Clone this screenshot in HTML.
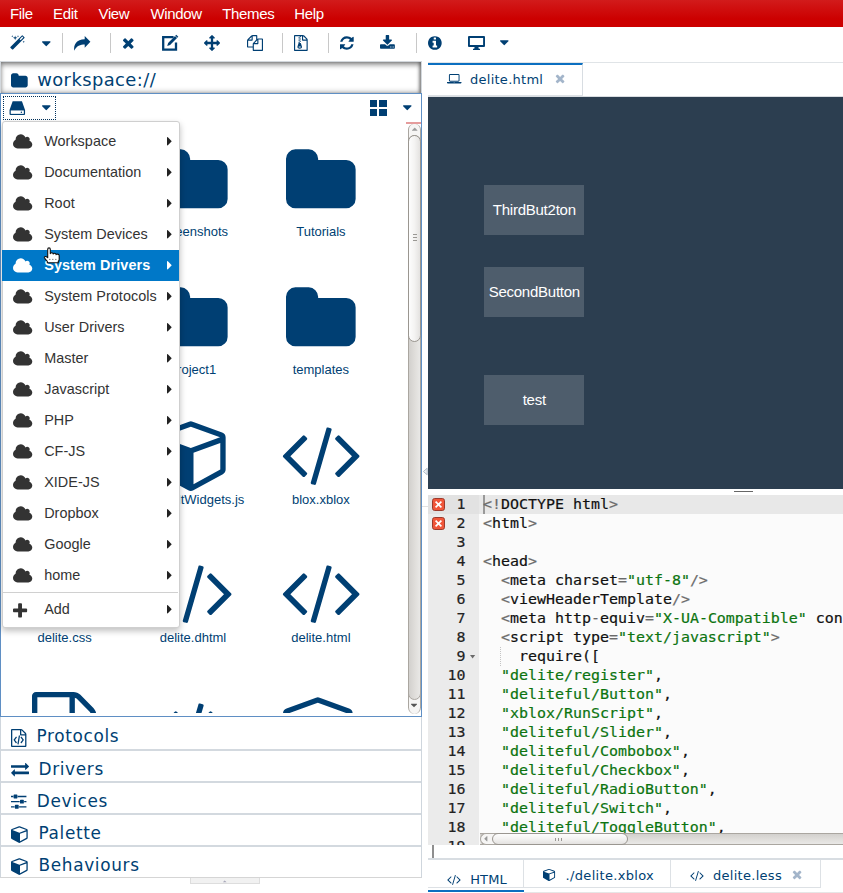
<!DOCTYPE html>
<html><head><meta charset="utf-8"><title>delite.html</title>
<style>
html,body{margin:0;padding:0;}
body{width:843px;height:893px;overflow:hidden;background:#fff;position:relative;font-family:"Liberation Sans",sans-serif;}
.b{position:absolute;box-sizing:border-box;}
.i{position:absolute;display:block;overflow:visible;}
.t{position:absolute;line-height:0;white-space:pre;}
.ls{font-family:"Liberation Sans",sans-serif;}
.dj{font-family:"DejaVu Sans",sans-serif;}
.mo{font-family:"DejaVu Sans Mono","Liberation Mono",monospace;-webkit-text-stroke:0.2px;}
.g{color:#6a6a6a}.s{color:#0c7410}
</style></head><body>

<div class="b" style="left:0px;top:0px;width:843px;height:27px;background:linear-gradient(#d21b1b,#cc0000 70%);"></div>
<div class="t ls" style="left:9.90px;top:14.00px;font-size:15px;color:#fff;letter-spacing:-0.35px;"><span>File</span></div>
<div class="t ls" style="left:53.00px;top:14.00px;font-size:15px;color:#fff;letter-spacing:-0.35px;"><span>Edit</span></div>
<div class="t ls" style="left:98.50px;top:14.00px;font-size:15px;color:#fff;letter-spacing:-0.35px;"><span>View</span></div>
<div class="t ls" style="left:150.50px;top:14.00px;font-size:15px;color:#fff;letter-spacing:-0.35px;"><span>Window</span></div>
<div class="t ls" style="left:222.30px;top:14.00px;font-size:15px;color:#fff;letter-spacing:-0.35px;"><span>Themes</span></div>
<div class="t ls" style="left:294.30px;top:14.00px;font-size:15px;color:#fff;letter-spacing:-0.35px;"><span>Help</span></div>
<svg class="i" style="left:10.30px;top:35.20px;" width="14.86" height="16.00" viewBox="0 0 1664 1792"><path fill="#003f73" transform="translate(0,1536) scale(1,-1)" d="M1190 955l293 293l-107 107l-293 -293zM1637 1248q0 -27 -18 -45l-1286 -1286q-18 -18 -45 -18t-45 18l-198 198q-18 18 -18 45t18 45l1286 1286q18 18 45 18t45 -18l198 -198q18 -18 18 -45zM286 1438l98 -30l-98 -30l-30 -98l-30 98l-98 30l98 30l30 98zM636 1276 l196 -60l-196 -60l-60 -196l-60 196l-196 60l196 60l60 196zM1566 798l98 -30l-98 -30l-30 -98l-30 98l-98 30l98 30l30 98zM926 1438l98 -30l-98 -30l-30 -98l-30 98l-98 30l98 30l30 98z"/></svg>
<svg class="i" style="left:121.70px;top:35.20px;" width="12.57" height="16.00" viewBox="0 0 1408 1792"><path fill="#003f73" transform="translate(0,1536) scale(1,-1)" d="M1298 214q0 -40 -28 -68l-136 -136q-28 -28 -68 -28t-68 28l-294 294l-294 -294q-28 -28 -68 -28t-68 28l-136 136q-28 28 -28 68t28 68l294 294l-294 294q-28 28 -28 68t28 68l136 136q28 28 68 28t68 -28l294 -294l294 294q28 28 68 28t68 -28l136 -136q28 -28 28 -68 t-28 -68l-294 -294l294 -294q28 -28 28 -68z"/></svg>
<svg class="i" style="left:204.00px;top:35.20px;" width="16.00" height="16.00" viewBox="0 0 1792 1792"><path fill="#003f73" transform="translate(0,1536) scale(1,-1)" d="M1792 640q0 -26 -19 -45l-256 -256q-19 -19 -45 -19t-45 19t-19 45v128h-384v-384h128q26 0 45 -19t19 -45t-19 -45l-256 -256q-19 -19 -45 -19t-45 19l-256 256q-19 19 -19 45t19 45t45 19h128v384h-384v-128q0 -26 -19 -45t-45 -19t-45 19l-256 256q-19 19 -19 45 t19 45l256 256q19 19 45 19t45 -19t19 -45v-128h384v384h-128q-26 0 -45 19t-19 45t19 45l256 256q19 19 45 19t45 -19l256 -256q19 -19 19 -45t-19 -45t-45 -19h-128v-384h384v128q0 26 19 45t45 19t45 -19l256 -256q19 -19 19 -45z"/></svg>
<svg class="i" style="left:246.70px;top:35.20px;" width="16.00" height="16.00" viewBox="0 0 1792 1792"><path fill="#003f73" transform="translate(0,1536) scale(1,-1)" d="M1696 1152q40 0 68 -28t28 -68v-1216q0 -40 -28 -68t-68 -28h-960q-40 0 -68 28t-28 68v288h-544q-40 0 -68 28t-28 68v672q0 40 20 88t48 76l408 408q28 28 76 48t88 20h416q40 0 68 -28t28 -68v-328q68 40 128 40h416zM1152 939l-299 -299h299v299zM512 1323l-299 -299 h299v299zM708 676l316 316v416h-384v-416q0 -40 -28 -68t-68 -28h-416v-640h512v256q0 40 20 88t48 76zM1664 -128v1152h-384v-416q0 -40 -28 -68t-68 -28h-416v-640h896z"/></svg>
<svg class="i" style="left:293.70px;top:35.20px;" width="13.71" height="16.00" viewBox="0 0 1536 1792"><path fill="#003f73" transform="translate(0,1536) scale(1,-1)" d="M640 1152v128h-128v-128h128zM768 1024v128h-128v-128h128zM640 896v128h-128v-128h128zM768 768v128h-128v-128h128zM1468 1156q28 -28 48 -76t20 -88v-1152q0 -40 -28 -68t-68 -28h-1344q-40 0 -68 28t-28 68v1600q0 40 28 68t68 28h896q40 0 88 -20t76 -48zM1024 1400 v-376h376q-10 29 -22 41l-313 313q-12 12 -41 22zM1408 -128v1024h-416q-40 0 -68 28t-28 68v416h-128v-128h-128v128h-512v-1536h1280zM781 593l107 -349q8 -27 8 -52q0 -83 -72.5 -137.5t-183.5 -54.5t-183.5 54.5t-72.5 137.5q0 25 8 52q21 63 120 396v128h128v-128h79 q22 0 39 -13t23 -34zM640 128q53 0 90.5 19t37.5 45t-37.5 45t-90.5 19t-90.5 -19t-37.5 -45t37.5 -45t90.5 -19z"/></svg>
<svg class="i" style="left:340.00px;top:35.20px;" width="13.71" height="16.00" viewBox="0 0 1536 1792"><path fill="#003f73" transform="translate(0,1536) scale(1,-1)" d="M1511 480q0 -5 -1 -7q-64 -268 -268 -434.5t-478 -166.5q-146 0 -282.5 55t-243.5 157l-129 -129q-19 -19 -45 -19t-45 19t-19 45v448q0 26 19 45t45 19h448q26 0 45 -19t19 -45t-19 -45l-137 -137q71 -66 161 -102t187 -36q134 0 250 65t186 179q11 17 53 117 q8 23 30 23h192q13 0 22.5 -9.5t9.5 -22.5zM1536 1280v-448q0 -26 -19 -45t-45 -19h-448q-26 0 -45 19t-19 45t19 45l138 138q-148 137 -349 137q-134 0 -250 -65t-186 -179q-11 -17 -53 -117q-8 -23 -30 -23h-199q-13 0 -22.5 9.5t-9.5 22.5v7q65 268 270 434.5t480 166.5 q146 0 284 -55.5t245 -156.5l130 129q19 19 45 19t45 -19t19 -45z"/></svg>
<svg class="i" style="left:380.00px;top:35.20px;" width="14.86" height="16.00" viewBox="0 0 1664 1792"><path fill="#003f73" transform="translate(0,1536) scale(1,-1)" d="M1280 192q0 26 -19 45t-45 19t-45 -19t-19 -45t19 -45t45 -19t45 19t19 45zM1536 192q0 26 -19 45t-45 19t-45 -19t-19 -45t19 -45t45 -19t45 19t19 45zM1664 416v-320q0 -40 -28 -68t-68 -28h-1472q-40 0 -68 28t-28 68v320q0 40 28 68t68 28h465l135 -136 q58 -56 136 -56t136 56l136 136h464q40 0 68 -28t28 -68zM1339 985q17 -41 -14 -70l-448 -448q-18 -19 -45 -19t-45 19l-448 448q-31 29 -14 70q17 39 59 39h256v448q0 26 19 45t45 19h256q26 0 45 -19t19 -45v-448h256q42 0 59 -39z"/></svg>
<svg class="i" style="left:427.50px;top:35.20px;" width="13.71" height="16.00" viewBox="0 0 1536 1792"><path fill="#003f73" transform="translate(0,1536) scale(1,-1)" d="M1024 160v160q0 14 -9 23t-23 9h-96v512q0 14 -9 23t-23 9h-320q-14 0 -23 -9t-9 -23v-160q0 -14 9 -23t23 -9h96v-320h-96q-14 0 -23 -9t-9 -23v-160q0 -14 9 -23t23 -9h448q14 0 23 9t9 23zM896 1056v160q0 14 -9 23t-23 9h-192q-14 0 -23 -9t-9 -23v-160q0 -14 9 -23 t23 -9h192q14 0 23 9t9 23zM1536 640q0 -209 -103 -385.5t-279.5 -279.5t-385.5 -103t-385.5 103t-279.5 279.5t-103 385.5t103 385.5t279.5 279.5t385.5 103t385.5 -103t279.5 -279.5t103 -385.5z"/></svg>
<svg class="i" style="left:41.70px;top:35.80px;" width="8.57" height="15.00" viewBox="0 0 1024 1792"><path fill="#003f73" transform="translate(0,1536) scale(1,-1)" d="M1024 832q0 -26 -19 -45l-448 -448q-19 -19 -45 -19t-45 19l-448 448q-19 19 -19 45t19 45t45 19h896q26 0 45 -19t19 -45z"/></svg>
<svg class="i" style="left:500.20px;top:35.20px;" width="8.57" height="15.00" viewBox="0 0 1024 1792"><path fill="#003f73" transform="translate(0,1536) scale(1,-1)" d="M1024 832q0 -26 -19 -45l-448 -448q-19 -19 -45 -19t-45 19l-448 448q-19 19 -19 45t19 45t45 19h896q26 0 45 -19t19 -45z"/></svg>
<svg class="i" style="left:73px;top:35px" width="19" height="17" viewBox="0 0 19 17"><path fill="#003f73" d="M11.7 0.9L17.4 6.8L11.7 12.7V9.5C7.5 9.5 3.4 10.8 1.3 15.7C0.3 9.5 3.6 4.6 11.7 4.3Z"/></svg>
<div class="b" style="left:62px;top:33px;width:1px;height:20px;background:#c8c8c8;"></div>
<div class="b" style="left:110px;top:33px;width:1px;height:20px;background:#c8c8c8;"></div>
<div class="b" style="left:282px;top:33px;width:1px;height:20px;background:#c8c8c8;"></div>
<div class="b" style="left:328px;top:33px;width:1px;height:20px;background:#c8c8c8;"></div>
<div class="b" style="left:416px;top:33px;width:1px;height:20px;background:#c8c8c8;"></div>
<svg class="i" style="left:161px;top:34px" width="19" height="18" viewBox="0 0 19 18"><path d="M12.6 3.2H2.2v12.4h12.8V8.6" fill="none" stroke="#003f73" stroke-width="2.3"/><path d="M15.3 0.8l2 2-8.2 8.2-2.9 0.9 0.9-2.9z" fill="#003f73"/><path d="M14.2 1.9l2 2" stroke="#fff" stroke-width="0.7"/></svg>
<svg class="i" style="left:468px;top:36px" width="17" height="14" viewBox="0 0 17 14"><path fill="#003f73" fill-rule="evenodd" d="M1 0h15q1 0 1 1v9q0 1-1 1h-15q-1 0-1-1v-9q0-1 1-1zM1.9 1.9v7.2h13.2v-7.2zM6.6 11h3.8l0.4 1.7h1.2v1.2h-7v-1.2h1.2z"/></svg>
<div class="b" style="left:0px;top:61px;width:422px;height:32px;border:1px solid #d3d8dd;border-bottom:none;box-shadow:inset 0 3px 5px rgba(0,0,0,.42), inset 0 -3px 4px rgba(0,0,0,.12), inset -2px 0 3px rgba(0,0,0,.3);background:#fff;"></div>
<svg class="i" style="left:10.50px;top:72.10px;" width="16.71" height="18.00" viewBox="0 0 1664 1792"><path fill="#003f73" transform="translate(0,1536) scale(1,-1)" d="M1664 928v-704q0 -92 -66 -158t-158 -66h-1216q-92 0 -158 66t-66 158v960q0 92 66 158t158 66h320q92 0 158 -66t66 -158v-32h672q92 0 158 -66t66 -158z"/></svg>
<div class="t dj" style="left:37.20px;top:80.00px;font-size:17.9px;color:#003f73;letter-spacing:0.42px;"><span>workspace://</span></div>
<div class="b" style="left:0px;top:93px;width:422px;height:624px;border:1px solid #5f8fc4;background:#fff;"></div>
<div class="b" style="left:3px;top:96px;width:53px;height:24px;border:1px dotted #00315c;"></div>
<svg class="i" style="left:9px;top:100.8px" width="16.6" height="14.2" viewBox="0 0 17 15"><path fill="#003f73" d="M3.6 0.3h9.8l3.3 9.2v4.2q0 1-1 1h-14.4q-1 0-1-1v-4.2z"/><rect x="1.6" y="10" width="13.8" height="3.6" fill="#fff"/><circle cx="12.8" cy="11.8" r="0.8" fill="#003f73"/></svg>
<svg class="i" style="left:42.00px;top:99.70px;" width="8.57" height="15.00" viewBox="0 0 1024 1792"><path fill="#003f73" transform="translate(0,1536) scale(1,-1)" d="M1024 832q0 -26 -19 -45l-448 -448q-19 -19 -45 -19t-45 19l-448 448q-19 19 -19 45t19 45t45 19h896q26 0 45 -19t19 -45z"/></svg>
<div class="b" style="left:370px;top:99.8px;width:7.3px;height:7.3px;background:#003f73;"></div>
<div class="b" style="left:379.3px;top:99.8px;width:7.3px;height:7.3px;background:#003f73;"></div>
<div class="b" style="left:370px;top:108.8px;width:7.3px;height:7.3px;background:#003f73;"></div>
<div class="b" style="left:379.3px;top:108.8px;width:7.3px;height:7.3px;background:#003f73;"></div>
<svg class="i" style="left:402.80px;top:99.70px;" width="8.57" height="15.00" viewBox="0 0 1024 1792"><path fill="#003f73" transform="translate(0,1536) scale(1,-1)" d="M1024 832q0 -26 -19 -45l-448 -448q-19 -19 -45 -19t-45 19l-448 448q-19 19 -19 45t19 45t45 19h896q26 0 45 -19t19 -45z"/></svg>
<div class="b" style="left:1px;top:121px;width:405px;height:592px;overflow:hidden">
<svg class="i" style="left:157.18px;top:23.00px;" width="69.64" height="75.00" viewBox="0 0 1664 1792"><path fill="#003f73" transform="translate(0,1536) scale(1,-1)" d="M1664 928v-704q0 -92 -66 -158t-158 -66h-1216q-92 0 -158 66t-66 158v960q0 92 66 158t158 66h320q92 0 158 -66t66 -158v-32h672q92 0 158 -66t66 -158z"/></svg>
<div class="t ls" style="left:42.00px;width:300px;text-align:center;top:111.00px;font-size:13px;color:#003f73;"><span>screenshots</span></div>
<svg class="i" style="left:285.08px;top:23.00px;" width="69.64" height="75.00" viewBox="0 0 1664 1792"><path fill="#003f73" transform="translate(0,1536) scale(1,-1)" d="M1664 928v-704q0 -92 -66 -158t-158 -66h-1216q-92 0 -158 66t-66 158v960q0 92 66 158t158 66h320q92 0 158 -66t66 -158v-32h672q92 0 158 -66t66 -158z"/></svg>
<div class="t ls" style="left:169.90px;width:300px;text-align:center;top:111.00px;font-size:13px;color:#003f73;"><span>Tutorials</span></div>
<svg class="i" style="left:157.18px;top:161.00px;" width="69.64" height="75.00" viewBox="0 0 1664 1792"><path fill="#003f73" transform="translate(0,1536) scale(1,-1)" d="M1664 928v-704q0 -92 -66 -158t-158 -66h-1216q-92 0 -158 66t-66 158v960q0 92 66 158t158 66h320q92 0 158 -66t66 -158v-32h672q92 0 158 -66t66 -158z"/></svg>
<div class="t ls" style="left:42.00px;width:300px;text-align:center;top:249.00px;font-size:13px;color:#003f73;"><span>project1</span></div>
<svg class="i" style="left:285.08px;top:161.00px;" width="69.64" height="75.00" viewBox="0 0 1664 1792"><path fill="#003f73" transform="translate(0,1536) scale(1,-1)" d="M1664 928v-704q0 -92 -66 -158t-158 -66h-1216q-92 0 -158 66t-66 158v960q0 92 66 158t158 66h320q92 0 158 -66t66 -158v-32h672q92 0 158 -66t66 -158z"/></svg>
<div class="t ls" style="left:169.90px;width:300px;text-align:center;top:249.00px;font-size:13px;color:#003f73;"><span>templates</span></div>
<svg class="i" style="left:154.50px;top:294.80px;" width="75.00" height="75.00" viewBox="0 0 1792 1792"><path fill="#003f73" transform="translate(0,1536) scale(1,-1)" d="M896 -93l640 349v636l-640 -233v-752zM832 772l698 254l-698 254l-698 -254zM1664 1024v-768q0 -35 -18 -65t-49 -47l-704 -384q-28 -16 -61 -16t-61 16l-704 384q-31 17 -49 47t-18 65v768q0 40 23 73t61 47l704 256q22 8 44 8t44 -8l704 -256q38 -14 61 -47t23 -73z "/></svg>
<div class="t ls" style="left:43.80px;width:300px;text-align:center;top:379.00px;font-size:13px;color:#003f73;"><span>defaultWidgets.js</span></div>
<svg class="i" style="left:279.72px;top:294.80px;" width="80.36" height="75.00" viewBox="0 0 1920 1792"><path fill="#003f73" transform="translate(0,1536) scale(1,-1)" d="M617 137l-50 -50q-10 -10 -23 -10t-23 10l-466 466q-10 10 -10 23t10 23l466 466q10 10 23 10t23 -10l50 -50q10 -10 10 -23t-10 -23l-393 -393l393 -393q10 -10 10 -23t-10 -23zM1208 1204l-373 -1291q-4 -13 -15.5 -19.5t-23.5 -2.5l-62 17q-13 4 -19.5 15.5t-2.5 24.5 l373 1291q4 13 15.5 19.5t23.5 2.5l62 -17q13 -4 19.5 -15.5t2.5 -24.5zM1865 553l-466 -466q-10 -10 -23 -10t-23 10l-50 50q-10 10 -10 23t10 23l393 393l-393 393q-10 10 -10 23t10 23l50 50q10 10 23 10t23 -10l466 -466q10 -10 10 -23t-10 -23z"/></svg>
<div class="t ls" style="left:169.90px;width:300px;text-align:center;top:379.00px;font-size:13px;color:#003f73;"><span>blox.xblox</span></div>
<div class="t ls" style="left:-86.40px;width:300px;text-align:center;top:517.00px;font-size:13px;color:#003f73;"><span>delite.css</span></div>
<svg class="i" style="left:151.82px;top:432.50px;" width="80.36" height="75.00" viewBox="0 0 1920 1792"><path fill="#003f73" transform="translate(0,1536) scale(1,-1)" d="M617 137l-50 -50q-10 -10 -23 -10t-23 10l-466 466q-10 10 -10 23t10 23l466 466q10 10 23 10t23 -10l50 -50q10 -10 10 -23t-10 -23l-393 -393l393 -393q10 -10 10 -23t-10 -23zM1208 1204l-373 -1291q-4 -13 -15.5 -19.5t-23.5 -2.5l-62 17q-13 4 -19.5 15.5t-2.5 24.5 l373 1291q4 13 15.5 19.5t23.5 2.5l62 -17q13 -4 19.5 -15.5t2.5 -24.5zM1865 553l-466 -466q-10 -10 -23 -10t-23 10l-50 50q-10 10 -10 23t10 23l393 393l-393 393q-10 10 -10 23t10 23l50 50q10 10 23 10t23 -10l466 -466q10 -10 10 -23t-10 -23z"/></svg>
<div class="t ls" style="left:42.00px;width:300px;text-align:center;top:517.00px;font-size:13px;color:#003f73;"><span>delite.dhtml</span></div>
<svg class="i" style="left:279.72px;top:432.50px;" width="80.36" height="75.00" viewBox="0 0 1920 1792"><path fill="#003f73" transform="translate(0,1536) scale(1,-1)" d="M617 137l-50 -50q-10 -10 -23 -10t-23 10l-466 466q-10 10 -10 23t10 23l466 466q10 10 23 10t23 -10l50 -50q10 -10 10 -23t-10 -23l-393 -393l393 -393q10 -10 10 -23t-10 -23zM1208 1204l-373 -1291q-4 -13 -15.5 -19.5t-23.5 -2.5l-62 17q-13 4 -19.5 15.5t-2.5 24.5 l373 1291q4 13 15.5 19.5t23.5 2.5l62 -17q13 -4 19.5 -15.5t2.5 -24.5zM1865 553l-466 -466q-10 -10 -23 -10t-23 10l-50 50q-10 10 -10 23t10 23l393 393l-393 393q-10 10 -10 23t10 23l50 50q10 10 23 10t23 -10l466 -466q10 -10 10 -23t-10 -23z"/></svg>
<div class="t ls" style="left:169.90px;width:300px;text-align:center;top:517.00px;font-size:13px;color:#003f73;"><span>delite.html</span></div>
<svg class="i" style="left:31.46px;top:571.00px;" width="64.29" height="75.00" viewBox="0 0 1536 1792"><path fill="#003f73" transform="translate(0,1536) scale(1,-1)" d="M1468 1156q28 -28 48 -76t20 -88v-1152q0 -40 -28 -68t-68 -28h-1344q-40 0 -68 28t-28 68v1600q0 40 28 68t68 28h896q40 0 88 -20t76 -48zM1024 1400v-376h376q-10 29 -22 41l-313 313q-12 12 -41 22zM1408 -128v1024h-416q-40 0 -68 28t-28 68v416h-768v-1536h1280z "/></svg>
<div class="t ls" style="left:-86.40px;width:300px;text-align:center;top:656.00px;font-size:13px;color:#003f73;"><span>delite.less</span></div>
<svg class="i" style="left:151.82px;top:571.00px;" width="80.36" height="75.00" viewBox="0 0 1920 1792"><path fill="#003f73" transform="translate(0,1536) scale(1,-1)" d="M617 137l-50 -50q-10 -10 -23 -10t-23 10l-466 466q-10 10 -10 23t10 23l466 466q10 10 23 10t23 -10l50 -50q10 -10 10 -23t-10 -23l-393 -393l393 -393q10 -10 10 -23t-10 -23zM1208 1204l-373 -1291q-4 -13 -15.5 -19.5t-23.5 -2.5l-62 17q-13 4 -19.5 15.5t-2.5 24.5 l373 1291q4 13 15.5 19.5t23.5 2.5l62 -17q13 -4 19.5 -15.5t2.5 -24.5zM1865 553l-466 -466q-10 -10 -23 -10t-23 10l-50 50q-10 10 -10 23t10 23l393 393l-393 393q-10 10 -10 23t10 23l50 50q10 10 23 10t23 -10l466 -466q10 -10 10 -23t-10 -23z"/></svg>
<div class="t ls" style="left:42.00px;width:300px;text-align:center;top:656.00px;font-size:13px;color:#003f73;"><span>delite.xml</span></div>
<svg class="i" style="left:282.40px;top:571.00px;" width="75.00" height="75.00" viewBox="0 0 1792 1792"><path fill="#003f73" transform="translate(0,1536) scale(1,-1)" d="M896 -93l640 349v636l-640 -233v-752zM832 772l698 254l-698 254l-698 -254zM1664 1024v-768q0 -35 -18 -65t-49 -47l-704 -384q-28 -16 -61 -16t-61 16l-704 384q-31 17 -49 47t-18 65v768q0 40 23 73t61 47l704 256q22 8 44 8t44 -8l704 -256q38 -14 61 -47t23 -73z "/></svg>
<div class="t ls" style="left:169.90px;width:300px;text-align:center;top:656.00px;font-size:13px;color:#003f73;"><span>delite.xblox</span></div>
</div>
<div class="b" style="left:406px;top:122px;width:15px;height:2px;background:#e59c9c;"></div>
<div class="b" style="left:408px;top:124px;width:13px;height:590px;background:#f6f5f4;border-left:1px solid #aaa6a0;border-right:1px solid #aaa6a0;border-radius:6px 6px 7px 7px;"></div>
<div class="b" style="left:408px;top:135px;width:13px;height:565px;background:linear-gradient(90deg,#d2d0cd,#e0dedb 55%,#e9e8e6);border:1px solid #aaa6a0;border-radius:7px;"></div>
<div class="b" style="left:408px;top:135px;width:13px;height:207px;background:linear-gradient(90deg,#fdfdfd,#f4f3f2 50%,#e4e2e0);border:1px solid #9a9690;border-radius:7px;"></div>
<div class="b" style="left:413px;top:234px;width:4px;height:1px;background:#9a9894;"></div>
<div class="b" style="left:413px;top:237px;width:4px;height:1px;background:#9a9894;"></div>
<div class="b" style="left:413px;top:240px;width:4px;height:1px;background:#9a9894;"></div>
<svg class="i" style="left:411.70px;top:123.80px;" width="5.43" height="9.50" viewBox="0 0 1024 1792"><path fill="#9c9c9c" transform="translate(0,1536) scale(1,-1)" d="M1024 320q0 -26 -19 -45t-45 -19h-896q-26 0 -45 19t-19 45t19 45l448 448q19 19 45 19t45 -19l448 -448q19 -19 19 -45z"/></svg>
<svg class="i" style="left:411.40px;top:699.60px;" width="6.00" height="10.50" viewBox="0 0 1024 1792"><path fill="#555" transform="translate(0,1536) scale(1,-1)" d="M1024 832q0 -26 -19 -45l-448 -448q-19 -19 -45 -19t-45 19l-448 448q-19 19 -19 45t19 45t45 19h896q26 0 45 -19t19 -45z"/></svg>
<div class="b" style="left:0px;top:717px;width:422px;height:161px;border-left:1px solid #cfd6dd;border-right:1px solid #cfd6dd;border-bottom:1px solid #d5d5d5;"></div>
<div class="b" style="left:1px;top:749px;width:420px;height:2px;background:#d3d9df;"></div>
<div class="b" style="left:1px;top:781px;width:420px;height:2px;background:#d3d9df;"></div>
<div class="b" style="left:1px;top:813px;width:420px;height:2px;background:#d3d9df;"></div>
<div class="b" style="left:1px;top:845px;width:420px;height:2px;background:#d3d9df;"></div>
<svg class="i" style="left:10.80px;top:728.50px;" width="15.43" height="18.00" viewBox="0 0 1536 1792"><path fill="#003f73" transform="translate(0,1536) scale(1,-1)" d="M1468 1156q28 -28 48 -76t20 -88v-1152q0 -40 -28 -68t-68 -28h-1344q-40 0 -68 28t-28 68v1600q0 40 28 68t68 28h896q40 0 88 -20t76 -48zM1024 1400v-376h376q-10 29 -22 41l-313 313q-12 12 -41 22zM1408 -128v1024h-416q-40 0 -68 28t-28 68v416h-768v-1536h1280z M480 768q8 11 21 12.5t24 -6.5l51 -38q11 -8 12.5 -21t-6.5 -24l-182 -243l182 -243q8 -11 6.5 -24t-12.5 -21l-51 -38q-11 -8 -24 -6.5t-21 12.5l-226 301q-14 19 0 38zM1282 467q14 -19 0 -38l-226 -301q-8 -11 -21 -12.5t-24 6.5l-51 38q-11 8 -12.5 21t6.5 24l182 243 l-182 243q-8 11 -6.5 24t12.5 21l51 38q11 8 24 6.5t21 -12.5zM662 6q-13 2 -20.5 13t-5.5 24l138 831q2 13 13 20.5t24 5.5l63 -10q13 -2 20.5 -13t5.5 -24l-138 -831q-2 -13 -13 -20.5t-24 -5.5z"/></svg>
<div class="t dj" style="left:36.40px;top:736.00px;font-size:16.9px;color:#003f73;letter-spacing:0.66px;"><span>Protocols</span></div>
<svg class="i" style="left:10.50px;top:760.20px;" width="18.00" height="18.00" viewBox="0 0 1792 1792"><path fill="#003f73" transform="translate(0,1536) scale(1,-1)" d="M1792 352v-192q0 -13 -9.5 -22.5t-22.5 -9.5h-1376v-192q0 -13 -9.5 -22.5t-22.5 -9.5q-12 0 -24 10l-319 320q-9 9 -9 22q0 14 9 23l320 320q9 9 23 9q13 0 22.5 -9.5t9.5 -22.5v-192h1376q13 0 22.5 -9.5t9.5 -22.5zM1792 896q0 -14 -9 -23l-320 -320q-9 -9 -23 -9 q-13 0 -22.5 9.5t-9.5 22.5v192h-1376q-13 0 -22.5 9.5t-9.5 22.5v192q0 13 9.5 22.5t22.5 9.5h1376v192q0 14 9 23t23 9q12 0 24 -10l319 -319q9 -9 9 -23z"/></svg>
<div class="t dj" style="left:38.50px;top:769.00px;font-size:16.9px;color:#003f73;letter-spacing:0.66px;"><span>Drivers</span></div>
<svg class="i" style="left:10.50px;top:792.20px;" width="15.43" height="18.00" viewBox="0 0 1536 1792"><path fill="#003f73" transform="translate(0,1536) scale(1,-1)" d="M352 128v-128h-352v128h352zM704 256q26 0 45 -19t19 -45v-256q0 -26 -19 -45t-45 -19h-256q-26 0 -45 19t-19 45v256q0 26 19 45t45 19h256zM864 640v-128h-864v128h864zM224 1152v-128h-224v128h224zM1536 128v-128h-736v128h736zM576 1280q26 0 45 -19t19 -45v-256 q0 -26 -19 -45t-45 -19h-256q-26 0 -45 19t-19 45v256q0 26 19 45t45 19h256zM1216 768q26 0 45 -19t19 -45v-256q0 -26 -19 -45t-45 -19h-256q-26 0 -45 19t-19 45v256q0 26 19 45t45 19h256zM1536 640v-128h-224v128h224zM1536 1152v-128h-864v128h864z"/></svg>
<div class="t dj" style="left:36.80px;top:801.00px;font-size:16.9px;color:#003f73;letter-spacing:0.66px;"><span>Devices</span></div>
<svg class="i" style="left:10.80px;top:824.70px;" width="18.00" height="18.00" viewBox="0 0 1792 1792"><path fill="#003f73" transform="translate(0,1536) scale(1,-1)" d="M896 -93l640 349v636l-640 -233v-752zM832 772l698 254l-698 254l-698 -254zM1664 1024v-768q0 -35 -18 -65t-49 -47l-704 -384q-28 -16 -61 -16t-61 16l-704 384q-31 17 -49 47t-18 65v768q0 40 23 73t61 47l704 256q22 8 44 8t44 -8l704 -256q38 -14 61 -47t23 -73z "/></svg>
<div class="t dj" style="left:38.50px;top:833.00px;font-size:16.9px;color:#003f73;letter-spacing:0.66px;"><span>Palette</span></div>
<svg class="i" style="left:10.80px;top:856.70px;" width="18.00" height="18.00" viewBox="0 0 1792 1792"><path fill="#003f73" transform="translate(0,1536) scale(1,-1)" d="M896 -93l640 349v636l-640 -233v-752zM832 772l698 254l-698 254l-698 -254zM1664 1024v-768q0 -35 -18 -65t-49 -47l-704 -384q-28 -16 -61 -16t-61 16l-704 384q-31 17 -49 47t-18 65v768q0 40 23 73t61 47l704 256q22 8 44 8t44 -8l704 -256q38 -14 61 -47t23 -73z "/></svg>
<div class="t dj" style="left:38.50px;top:865.00px;font-size:16.9px;color:#003f73;letter-spacing:0.66px;"><span>Behaviours</span></div>
<div class="b" style="left:190px;top:878px;width:70px;height:6px;background:#f1f1f1;border:1px solid #ddd;border-top:none;"></div>
<svg class="i" style="left:222.50px;top:877.50px;" width="3.43" height="6.00" viewBox="0 0 1024 1792"><path fill="#aab" transform="translate(0,1536) scale(1,-1)" d="M1024 320q0 -26 -19 -45t-45 -19h-896q-26 0 -45 19t-19 45t19 45l448 448q19 19 45 19t45 -19l448 -448q19 -19 19 -45z"/></svg>
<svg class="i" style="left:422px;top:466px" width="7" height="11" viewBox="0 0 7 11"><path d="M5.2 2.2v6.6L1.4 5.5z" fill="#eef1f4" stroke="#a8b4c2" stroke-width="0.9"/></svg>
<div class="b" style="left:422px;top:506px;width:6px;height:1px;background:#e2e2e2;"></div>
<div class="b" style="left:428px;top:62px;width:415px;height:1px;background:#e0e4e7;"></div>
<div class="b" style="left:428px;top:63px;width:155px;height:33px;border-top:2px solid #0b6fc0;border-right:1px solid #d8dde2;background:#fff;"></div>
<div class="b" style="left:428px;top:95px;width:155px;height:1px;background:#dde1e5;"></div>
<div class="b" style="left:428px;top:96px;width:415px;height:1px;background:#d9dde1;"></div>
<svg class="i" style="left:447.00px;top:72.30px;" width="14.46" height="13.50" viewBox="0 0 1920 1792"><path fill="#003f73" transform="translate(0,1536) scale(1,-1)" d="M416 256q-66 0 -113 47t-47 113v704q0 66 47 113t113 47h1088q66 0 113 -47t47 -113v-704q0 -66 -47 -113t-113 -47h-1088zM384 1120v-704q0 -13 9.5 -22.5t22.5 -9.5h1088q13 0 22.5 9.5t9.5 22.5v704q0 13 -9.5 22.5t-22.5 9.5h-1088q-13 0 -22.5 -9.5t-9.5 -22.5z M1760 192h160v-96q0 -40 -47 -68t-113 -28h-1600q-66 0 -113 28t-47 68v96h160h1600zM1040 96q16 0 16 16t-16 16h-160q-16 0 -16 -16t16 -16h160z"/></svg>
<div class="t dj" style="left:470.00px;top:80.00px;font-size:13px;color:#003f73;letter-spacing:0.26px;"><span>delite.html</span></div>
<svg class="i" style="left:555.10px;top:71.60px;" width="10.21" height="13.00" viewBox="0 0 1408 1792"><path fill="#a3b5ca" transform="translate(0,1536) scale(1,-1)" d="M1298 214q0 -40 -28 -68l-136 -136q-28 -28 -68 -28t-68 28l-294 294l-294 -294q-28 -28 -68 -28t-68 28l-136 136q-28 28 -28 68t28 68l294 294l-294 294q-28 28 -28 68t28 68l136 136q28 28 68 28t68 -28l294 -294l294 294q28 28 68 28t68 -28l136 -136q28 -28 28 -68 t-28 -68l-294 -294l294 -294q28 -28 28 -68z"/></svg>
<div class="b" style="left:428px;top:97px;width:415px;height:392px;background:#2c3e50;"></div>
<div class="b" style="left:484px;top:185px;width:100px;height:50px;background:#4e5d6c;"></div>
<div class="t ls" style="left:384.30px;width:300px;text-align:center;top:210.00px;font-size:15px;color:#fff;letter-spacing:-0.25px;"><span>ThirdBut2ton</span></div>
<div class="b" style="left:484px;top:267px;width:100px;height:50px;background:#4e5d6c;"></div>
<div class="t ls" style="left:384.30px;width:300px;text-align:center;top:292.00px;font-size:15px;color:#fff;letter-spacing:-0.25px;"><span>SecondButton</span></div>
<div class="b" style="left:484px;top:375px;width:100px;height:50px;background:#4e5d6c;"></div>
<div class="t ls" style="left:384.30px;width:300px;text-align:center;top:400.00px;font-size:15px;color:#fff;letter-spacing:-0.25px;"><span>test</span></div>
<div class="b" style="left:734px;top:490.5px;width:19px;height:1.2px;background:#666;"></div>
<div class="b" style="left:428px;top:495px;width:415px;height:350px;background:#fbfbfb;"></div>
<div class="b" style="left:428px;top:495px;width:51px;height:350px;background:#ebebeb;"></div>
<div class="b" style="left:428px;top:495px;width:51px;height:19px;background:#e2e2e2;"></div>
<div class="b" style="left:479px;top:495px;width:364px;height:19px;background:#e8e8e8;"></div>
<div class="b" style="left:483.4px;top:495px;width:1.2px;height:19px;background:#999;"></div>
<div class="b" style="left:428px;top:495px;width:415px;height:350px;overflow:hidden">
<div class="t mo" style="left:0;width:37.5px;text-align:right;top:9px;font-size:14.95px;color:#222"><span>1</span></div>
<div class="t mo" style="left:55px;top:9px;font-size:14.95px;color:#111"><span><span class="g">&lt;!</span>DOCTYPE html<span class="g">&gt;</span></span></div>
<div class="t mo" style="left:0;width:37.5px;text-align:right;top:28px;font-size:14.95px;color:#222"><span>2</span></div>
<div class="t mo" style="left:55px;top:28px;font-size:14.95px;color:#111"><span><span class="g">&lt;</span>html<span class="g">&gt;</span></span></div>
<div class="t mo" style="left:0;width:37.5px;text-align:right;top:47px;font-size:14.95px;color:#222"><span>3</span></div>
<div class="t mo" style="left:55px;top:47px;font-size:14.95px;color:#111"><span></span></div>
<div class="t mo" style="left:0;width:37.5px;text-align:right;top:66px;font-size:14.95px;color:#222"><span>4</span></div>
<div class="t mo" style="left:55px;top:66px;font-size:14.95px;color:#111"><span><span class="g">&lt;</span>head<span class="g">&gt;</span></span></div>
<div class="t mo" style="left:0;width:37.5px;text-align:right;top:85px;font-size:14.95px;color:#222"><span>5</span></div>
<div class="t mo" style="left:55px;top:85px;font-size:14.95px;color:#111"><span>  <span class="g">&lt;</span>meta charset<span class="g">=</span><span class="s">&quot;utf-8&quot;</span><span class="g">/&gt;</span></span></div>
<div class="t mo" style="left:0;width:37.5px;text-align:right;top:104px;font-size:14.95px;color:#222"><span>6</span></div>
<div class="t mo" style="left:55px;top:104px;font-size:14.95px;color:#111"><span>  <span class="g">&lt;</span>viewHeaderTemplate<span class="g">/&gt;</span></span></div>
<div class="t mo" style="left:0;width:37.5px;text-align:right;top:123px;font-size:14.95px;color:#222"><span>7</span></div>
<div class="t mo" style="left:55px;top:123px;font-size:14.95px;color:#111"><span>  <span class="g">&lt;</span>meta http<span class="g">-</span>equiv<span class="g">=</span><span class="s">&quot;X-UA-Compatible&quot;</span> content<span class="g">=</span><span class="s">&quot;IE=edge&quot;</span><span class="g">&gt;</span></span></div>
<div class="t mo" style="left:0;width:37.5px;text-align:right;top:142px;font-size:14.95px;color:#222"><span>8</span></div>
<div class="t mo" style="left:55px;top:142px;font-size:14.95px;color:#111"><span>  <span class="g">&lt;</span>script type<span class="g">=</span><span class="s">&quot;text/javascript&quot;</span><span class="g">&gt;</span></span></div>
<div class="t mo" style="left:0;width:37.5px;text-align:right;top:161px;font-size:14.95px;color:#222"><span>9</span></div>
<div class="t mo" style="left:55px;top:161px;font-size:14.95px;color:#111"><span>    require([</span></div>
<div class="t mo" style="left:0;width:37.5px;text-align:right;top:180px;font-size:14.95px;color:#222"><span>10</span></div>
<div class="t mo" style="left:55px;top:180px;font-size:14.95px;color:#111"><span>  <span class="s">&quot;delite/register&quot;</span>,</span></div>
<div class="t mo" style="left:0;width:37.5px;text-align:right;top:199px;font-size:14.95px;color:#222"><span>11</span></div>
<div class="t mo" style="left:55px;top:199px;font-size:14.95px;color:#111"><span>  <span class="s">&quot;deliteful/Button&quot;</span>,</span></div>
<div class="t mo" style="left:0;width:37.5px;text-align:right;top:218px;font-size:14.95px;color:#222"><span>12</span></div>
<div class="t mo" style="left:55px;top:218px;font-size:14.95px;color:#111"><span>  <span class="s">&quot;xblox/RunScript&quot;</span>,</span></div>
<div class="t mo" style="left:0;width:37.5px;text-align:right;top:237px;font-size:14.95px;color:#222"><span>13</span></div>
<div class="t mo" style="left:55px;top:237px;font-size:14.95px;color:#111"><span>  <span class="s">&quot;deliteful/Slider&quot;</span>,</span></div>
<div class="t mo" style="left:0;width:37.5px;text-align:right;top:256px;font-size:14.95px;color:#222"><span>14</span></div>
<div class="t mo" style="left:55px;top:256px;font-size:14.95px;color:#111"><span>  <span class="s">&quot;deliteful/Combobox&quot;</span>,</span></div>
<div class="t mo" style="left:0;width:37.5px;text-align:right;top:275px;font-size:14.95px;color:#222"><span>15</span></div>
<div class="t mo" style="left:55px;top:275px;font-size:14.95px;color:#111"><span>  <span class="s">&quot;deliteful/Checkbox&quot;</span>,</span></div>
<div class="t mo" style="left:0;width:37.5px;text-align:right;top:294px;font-size:14.95px;color:#222"><span>16</span></div>
<div class="t mo" style="left:55px;top:294px;font-size:14.95px;color:#111"><span>  <span class="s">&quot;deliteful/RadioButton&quot;</span>,</span></div>
<div class="t mo" style="left:0;width:37.5px;text-align:right;top:313px;font-size:14.95px;color:#222"><span>17</span></div>
<div class="t mo" style="left:55px;top:313px;font-size:14.95px;color:#111"><span>  <span class="s">&quot;deliteful/Switch&quot;</span>,</span></div>
<div class="t mo" style="left:0;width:37.5px;text-align:right;top:332px;font-size:14.95px;color:#222"><span>18</span></div>
<div class="t mo" style="left:55px;top:332px;font-size:14.95px;color:#111"><span>  <span class="s">&quot;deliteful/ToggleButton&quot;</span>,</span></div>
<div class="t mo" style="left:0;width:37.5px;text-align:right;top:351px;font-size:14.95px;color:#222"><span>19</span></div>
<div class="t mo" style="left:55px;top:351px;font-size:14.95px;color:#111"><span>  <span class="s">&quot;deliteful/ProgressBar&quot;</span>,</span></div>
<svg class="i" style="left:4px;top:3.2px" width="13" height="13" viewBox="0 0 13 13"><rect x="0.5" y="0.5" width="12" height="12" rx="2.2" fill="#f0563a" stroke="#9c3a2c"/><path d="M3.6 3.6l5.8 5.8M9.4 3.6l-5.8 5.8" stroke="#fff" stroke-width="1.7" stroke-linecap="butt"/></svg>
<svg class="i" style="left:4px;top:22.2px" width="13" height="13" viewBox="0 0 13 13"><rect x="0.5" y="0.5" width="12" height="12" rx="2.2" fill="#f0563a" stroke="#9c3a2c"/><path d="M3.6 3.6l5.8 5.8M9.4 3.6l-5.8 5.8" stroke="#fff" stroke-width="1.7" stroke-linecap="butt"/></svg>
<svg class="i" style="left:42.2px;top:159.8px" width="5.2" height="3.6" viewBox="0 0 5.2 3.6"><path d="M0 0h5.2L2.6 3.6z" fill="#6a6a6a"/></svg>
<div class="b" style="left:72px;top:152px;width:1px;height:19px;background:repeating-linear-gradient(#c4c4c4 0 1px,transparent 1px 2px);"></div>
</div>
<div class="b" style="left:479.5px;top:833px;width:364px;height:12px;background:linear-gradient(#d2d0cd,#e0dedb 55%,#e9e8e6);border-top:1px solid #aaa6a0;border-bottom:1px solid #aaa6a0;"></div>
<div class="b" style="left:479.5px;top:833px;width:14px;height:12px;background:#f6f5f4;border:1px solid #aaa6a0;border-right:none;border-radius:6px 0 0 6px;"></div>
<div class="b" style="left:491.8px;top:833px;width:136px;height:12px;background:linear-gradient(#fdfdfd,#f3f2f1 50%,#e4e2e0);border:1px solid #9a9690;border-radius:6px;"></div>
<svg class="i" style="left:483.60px;top:834.20px;" width="3.39" height="9.50" viewBox="0 0 640 1792"><path fill="#999" transform="translate(0,1536) scale(1,-1)" d="M640 1088v-896q0 -26 -19 -45t-45 -19t-45 19l-448 448q-19 19 -19 45t19 45l448 448q19 19 45 19t45 -19t19 -45z"/></svg>
<div class="b" style="left:555px;top:838px;width:1px;height:3.4px;background:#9a9894;"></div>
<div class="b" style="left:558px;top:838px;width:1px;height:3.4px;background:#9a9894;"></div>
<div class="b" style="left:561px;top:838px;width:1px;height:3.4px;background:#9a9894;"></div>
<div class="b" style="left:432px;top:845px;width:1.6px;height:13px;background:#8f8f8f;"></div>
<div class="b" style="left:428px;top:858px;width:415px;height:2px;background:#d8dde2;"></div>
<div class="b" style="left:428px;top:887px;width:393px;height:1px;background:#dde1e5;"></div>
<div class="b" style="left:523px;top:860px;width:1px;height:28px;background:#dde1e5;"></div>
<div class="b" style="left:670px;top:860px;width:1px;height:28px;background:#dde1e5;"></div>
<div class="b" style="left:820px;top:860px;width:1px;height:28px;background:#dde1e5;"></div>
<div class="b" style="left:428px;top:889.5px;width:96px;height:2.5px;background:#0b6fc0;"></div>
<div class="b" style="left:524px;top:892px;width:319px;height:1px;background:#e6e6e6;"></div>
<svg class="i" style="left:447.40px;top:872.60px;" width="13.93" height="13.00" viewBox="0 0 1920 1792"><path fill="#003f73" transform="translate(0,1536) scale(1,-1)" d="M617 137l-50 -50q-10 -10 -23 -10t-23 10l-466 466q-10 10 -10 23t10 23l466 466q10 10 23 10t23 -10l50 -50q10 -10 10 -23t-10 -23l-393 -393l393 -393q10 -10 10 -23t-10 -23zM1208 1204l-373 -1291q-4 -13 -15.5 -19.5t-23.5 -2.5l-62 17q-13 4 -19.5 15.5t-2.5 24.5 l373 1291q4 13 15.5 19.5t23.5 2.5l62 -17q13 -4 19.5 -15.5t2.5 -24.5zM1865 553l-466 -466q-10 -10 -23 -10t-23 10l-50 50q-10 10 -10 23t10 23l393 393l-393 393q-10 10 -10 23t10 23l50 50q10 10 23 10t23 -10l466 -466q10 -10 10 -23t-10 -23z"/></svg>
<div class="t dj" style="left:470.20px;top:880.00px;font-size:13px;color:#003f73;letter-spacing:0.15px;"><span>HTML</span></div>
<svg class="i" style="left:543.00px;top:868.20px;" width="13.00" height="13.00" viewBox="0 0 1792 1792"><path fill="#003f73" transform="translate(0,1536) scale(1,-1)" d="M896 -93l640 349v636l-640 -233v-752zM832 772l698 254l-698 254l-698 -254zM1664 1024v-768q0 -35 -18 -65t-49 -47l-704 -384q-28 -16 -61 -16t-61 16l-704 384q-31 17 -49 47t-18 65v768q0 40 23 73t61 47l704 256q22 8 44 8t44 -8l704 -256q38 -14 61 -47t23 -73z "/></svg>
<div class="t dj" style="left:565.60px;top:876.00px;font-size:13px;color:#003f73;letter-spacing:0.32px;"><span>./delite.xblox</span></div>
<svg class="i" style="left:690.20px;top:868.60px;" width="13.93" height="13.00" viewBox="0 0 1920 1792"><path fill="#003f73" transform="translate(0,1536) scale(1,-1)" d="M617 137l-50 -50q-10 -10 -23 -10t-23 10l-466 466q-10 10 -10 23t10 23l466 466q10 10 23 10t23 -10l50 -50q10 -10 10 -23t-10 -23l-393 -393l393 -393q10 -10 10 -23t-10 -23zM1208 1204l-373 -1291q-4 -13 -15.5 -19.5t-23.5 -2.5l-62 17q-13 4 -19.5 15.5t-2.5 24.5 l373 1291q4 13 15.5 19.5t23.5 2.5l62 -17q13 -4 19.5 -15.5t2.5 -24.5zM1865 553l-466 -466q-10 -10 -23 -10t-23 10l-50 50q-10 10 -10 23t10 23l393 393l-393 393q-10 10 -10 23t10 23l50 50q10 10 23 10t23 -10l466 -466q10 -10 10 -23t-10 -23z"/></svg>
<div class="t dj" style="left:713.00px;top:876.00px;font-size:13px;color:#003f73;letter-spacing:0.28px;"><span>delite.less</span></div>
<svg class="i" style="left:792.40px;top:867.60px;" width="10.21" height="13.00" viewBox="0 0 1408 1792"><path fill="#a3b5ca" transform="translate(0,1536) scale(1,-1)" d="M1298 214q0 -40 -28 -68l-136 -136q-28 -28 -68 -28t-68 28l-294 294l-294 -294q-28 -28 -68 -28t-68 28l-136 136q-28 28 -28 68t28 68l294 294l-294 294q-28 28 -28 68t28 68l136 136q28 28 68 28t68 -28l294 -294l294 294q28 28 68 28t68 -28l136 -136q28 -28 28 -68 t-28 -68l-294 -294l294 -294q28 -28 28 -68z"/></svg>
<div class="b" style="left:2px;top:121px;width:177.6px;height:507.4px;background:#fff;border:1px solid #cfcfcf;border-radius:3px;box-shadow:0 3px 6px rgba(0,0,0,.25);"></div>
<svg class="i" style="left:13.00px;top:132.50px;" width="19.29" height="18.00" viewBox="0 0 1920 1792"><path fill="#333" transform="translate(0,1536) scale(1,-1)" d="M1920 384q0 -159 -112.5 -271.5t-271.5 -112.5h-1088q-185 0 -316.5 131.5t-131.5 316.5q0 132 71 241.5t187 163.5q-2 28 -2 43q0 212 150 362t362 150q158 0 286.5 -88t187.5 -230q70 62 166 62q106 0 181 -75t75 -181q0 -75 -41 -138q129 -30 213 -134.5t84 -239.5z "/></svg>
<div class="t ls" style="left:44.20px;top:141.00px;font-size:14.4px;color:#333;letter-spacing:0.03px;"><span>Workspace</span></div>
<svg class="i" style="left:167.00px;top:134.00px;" width="5.18" height="14.50" viewBox="0 0 640 1792"><path fill="#222" transform="translate(0,1536) scale(1,-1)" d="M576 640q0 -26 -19 -45l-448 -448q-19 -19 -45 -19t-45 19t-19 45v896q0 26 19 45t45 19t45 -19l448 -448q19 -19 19 -45z"/></svg>
<svg class="i" style="left:13.00px;top:163.50px;" width="19.29" height="18.00" viewBox="0 0 1920 1792"><path fill="#333" transform="translate(0,1536) scale(1,-1)" d="M1920 384q0 -159 -112.5 -271.5t-271.5 -112.5h-1088q-185 0 -316.5 131.5t-131.5 316.5q0 132 71 241.5t187 163.5q-2 28 -2 43q0 212 150 362t362 150q158 0 286.5 -88t187.5 -230q70 62 166 62q106 0 181 -75t75 -181q0 -75 -41 -138q129 -30 213 -134.5t84 -239.5z "/></svg>
<div class="t ls" style="left:44.20px;top:172.00px;font-size:14.4px;color:#333;letter-spacing:0.03px;"><span>Documentation</span></div>
<svg class="i" style="left:167.00px;top:165.00px;" width="5.18" height="14.50" viewBox="0 0 640 1792"><path fill="#222" transform="translate(0,1536) scale(1,-1)" d="M576 640q0 -26 -19 -45l-448 -448q-19 -19 -45 -19t-45 19t-19 45v896q0 26 19 45t45 19t45 -19l448 -448q19 -19 19 -45z"/></svg>
<svg class="i" style="left:13.00px;top:194.50px;" width="19.29" height="18.00" viewBox="0 0 1920 1792"><path fill="#333" transform="translate(0,1536) scale(1,-1)" d="M1920 384q0 -159 -112.5 -271.5t-271.5 -112.5h-1088q-185 0 -316.5 131.5t-131.5 316.5q0 132 71 241.5t187 163.5q-2 28 -2 43q0 212 150 362t362 150q158 0 286.5 -88t187.5 -230q70 62 166 62q106 0 181 -75t75 -181q0 -75 -41 -138q129 -30 213 -134.5t84 -239.5z "/></svg>
<div class="t ls" style="left:44.20px;top:203.00px;font-size:14.4px;color:#333;letter-spacing:0.03px;"><span>Root</span></div>
<svg class="i" style="left:167.00px;top:196.00px;" width="5.18" height="14.50" viewBox="0 0 640 1792"><path fill="#222" transform="translate(0,1536) scale(1,-1)" d="M576 640q0 -26 -19 -45l-448 -448q-19 -19 -45 -19t-45 19t-19 45v896q0 26 19 45t45 19t45 -19l448 -448q19 -19 19 -45z"/></svg>
<svg class="i" style="left:13.00px;top:225.50px;" width="19.29" height="18.00" viewBox="0 0 1920 1792"><path fill="#333" transform="translate(0,1536) scale(1,-1)" d="M1920 384q0 -159 -112.5 -271.5t-271.5 -112.5h-1088q-185 0 -316.5 131.5t-131.5 316.5q0 132 71 241.5t187 163.5q-2 28 -2 43q0 212 150 362t362 150q158 0 286.5 -88t187.5 -230q70 62 166 62q106 0 181 -75t75 -181q0 -75 -41 -138q129 -30 213 -134.5t84 -239.5z "/></svg>
<div class="t ls" style="left:44.20px;top:234.00px;font-size:14.4px;color:#333;letter-spacing:0.03px;"><span>System Devices</span></div>
<svg class="i" style="left:167.00px;top:227.00px;" width="5.18" height="14.50" viewBox="0 0 640 1792"><path fill="#222" transform="translate(0,1536) scale(1,-1)" d="M576 640q0 -26 -19 -45l-448 -448q-19 -19 -45 -19t-45 19t-19 45v896q0 26 19 45t45 19t45 -19l448 -448q19 -19 19 -45z"/></svg>
<div class="b" style="left:2px;top:250px;width:177.3px;height:30.5px;background:#0078c8;"></div>
<svg class="i" style="left:13.00px;top:256.50px;" width="19.29" height="18.00" viewBox="0 0 1920 1792"><path fill="#fff" transform="translate(0,1536) scale(1,-1)" d="M1920 384q0 -159 -112.5 -271.5t-271.5 -112.5h-1088q-185 0 -316.5 131.5t-131.5 316.5q0 132 71 241.5t187 163.5q-2 28 -2 43q0 212 150 362t362 150q158 0 286.5 -88t187.5 -230q70 62 166 62q106 0 181 -75t75 -181q0 -75 -41 -138q129 -30 213 -134.5t84 -239.5z "/></svg>
<div class="t ls" style="left:44.20px;top:265.00px;font-size:14.4px;color:#fff;font-weight:bold;letter-spacing:0.1px;"><span>System Drivers</span></div>
<svg class="i" style="left:167.00px;top:258.00px;" width="5.18" height="14.50" viewBox="0 0 640 1792"><path fill="#fff" transform="translate(0,1536) scale(1,-1)" d="M576 640q0 -26 -19 -45l-448 -448q-19 -19 -45 -19t-45 19t-19 45v896q0 26 19 45t45 19t45 -19l448 -448q19 -19 19 -45z"/></svg>
<svg class="i" style="left:13.00px;top:287.50px;" width="19.29" height="18.00" viewBox="0 0 1920 1792"><path fill="#333" transform="translate(0,1536) scale(1,-1)" d="M1920 384q0 -159 -112.5 -271.5t-271.5 -112.5h-1088q-185 0 -316.5 131.5t-131.5 316.5q0 132 71 241.5t187 163.5q-2 28 -2 43q0 212 150 362t362 150q158 0 286.5 -88t187.5 -230q70 62 166 62q106 0 181 -75t75 -181q0 -75 -41 -138q129 -30 213 -134.5t84 -239.5z "/></svg>
<div class="t ls" style="left:44.20px;top:296.00px;font-size:14.4px;color:#333;letter-spacing:0.03px;"><span>System Protocols</span></div>
<svg class="i" style="left:167.00px;top:289.00px;" width="5.18" height="14.50" viewBox="0 0 640 1792"><path fill="#222" transform="translate(0,1536) scale(1,-1)" d="M576 640q0 -26 -19 -45l-448 -448q-19 -19 -45 -19t-45 19t-19 45v896q0 26 19 45t45 19t45 -19l448 -448q19 -19 19 -45z"/></svg>
<svg class="i" style="left:13.00px;top:318.50px;" width="19.29" height="18.00" viewBox="0 0 1920 1792"><path fill="#333" transform="translate(0,1536) scale(1,-1)" d="M1920 384q0 -159 -112.5 -271.5t-271.5 -112.5h-1088q-185 0 -316.5 131.5t-131.5 316.5q0 132 71 241.5t187 163.5q-2 28 -2 43q0 212 150 362t362 150q158 0 286.5 -88t187.5 -230q70 62 166 62q106 0 181 -75t75 -181q0 -75 -41 -138q129 -30 213 -134.5t84 -239.5z "/></svg>
<div class="t ls" style="left:44.20px;top:327.00px;font-size:14.4px;color:#333;letter-spacing:0.03px;"><span>User Drivers</span></div>
<svg class="i" style="left:167.00px;top:320.00px;" width="5.18" height="14.50" viewBox="0 0 640 1792"><path fill="#222" transform="translate(0,1536) scale(1,-1)" d="M576 640q0 -26 -19 -45l-448 -448q-19 -19 -45 -19t-45 19t-19 45v896q0 26 19 45t45 19t45 -19l448 -448q19 -19 19 -45z"/></svg>
<svg class="i" style="left:13.00px;top:349.50px;" width="19.29" height="18.00" viewBox="0 0 1920 1792"><path fill="#333" transform="translate(0,1536) scale(1,-1)" d="M1920 384q0 -159 -112.5 -271.5t-271.5 -112.5h-1088q-185 0 -316.5 131.5t-131.5 316.5q0 132 71 241.5t187 163.5q-2 28 -2 43q0 212 150 362t362 150q158 0 286.5 -88t187.5 -230q70 62 166 62q106 0 181 -75t75 -181q0 -75 -41 -138q129 -30 213 -134.5t84 -239.5z "/></svg>
<div class="t ls" style="left:44.20px;top:358.00px;font-size:14.4px;color:#333;letter-spacing:0.03px;"><span>Master</span></div>
<svg class="i" style="left:167.00px;top:351.00px;" width="5.18" height="14.50" viewBox="0 0 640 1792"><path fill="#222" transform="translate(0,1536) scale(1,-1)" d="M576 640q0 -26 -19 -45l-448 -448q-19 -19 -45 -19t-45 19t-19 45v896q0 26 19 45t45 19t45 -19l448 -448q19 -19 19 -45z"/></svg>
<svg class="i" style="left:13.00px;top:380.50px;" width="19.29" height="18.00" viewBox="0 0 1920 1792"><path fill="#333" transform="translate(0,1536) scale(1,-1)" d="M1920 384q0 -159 -112.5 -271.5t-271.5 -112.5h-1088q-185 0 -316.5 131.5t-131.5 316.5q0 132 71 241.5t187 163.5q-2 28 -2 43q0 212 150 362t362 150q158 0 286.5 -88t187.5 -230q70 62 166 62q106 0 181 -75t75 -181q0 -75 -41 -138q129 -30 213 -134.5t84 -239.5z "/></svg>
<div class="t ls" style="left:44.20px;top:389.00px;font-size:14.4px;color:#333;letter-spacing:0.03px;"><span>Javascript</span></div>
<svg class="i" style="left:167.00px;top:382.00px;" width="5.18" height="14.50" viewBox="0 0 640 1792"><path fill="#222" transform="translate(0,1536) scale(1,-1)" d="M576 640q0 -26 -19 -45l-448 -448q-19 -19 -45 -19t-45 19t-19 45v896q0 26 19 45t45 19t45 -19l448 -448q19 -19 19 -45z"/></svg>
<svg class="i" style="left:13.00px;top:411.50px;" width="19.29" height="18.00" viewBox="0 0 1920 1792"><path fill="#333" transform="translate(0,1536) scale(1,-1)" d="M1920 384q0 -159 -112.5 -271.5t-271.5 -112.5h-1088q-185 0 -316.5 131.5t-131.5 316.5q0 132 71 241.5t187 163.5q-2 28 -2 43q0 212 150 362t362 150q158 0 286.5 -88t187.5 -230q70 62 166 62q106 0 181 -75t75 -181q0 -75 -41 -138q129 -30 213 -134.5t84 -239.5z "/></svg>
<div class="t ls" style="left:44.20px;top:420.00px;font-size:14.4px;color:#333;letter-spacing:0.03px;"><span>PHP</span></div>
<svg class="i" style="left:167.00px;top:413.00px;" width="5.18" height="14.50" viewBox="0 0 640 1792"><path fill="#222" transform="translate(0,1536) scale(1,-1)" d="M576 640q0 -26 -19 -45l-448 -448q-19 -19 -45 -19t-45 19t-19 45v896q0 26 19 45t45 19t45 -19l448 -448q19 -19 19 -45z"/></svg>
<svg class="i" style="left:13.00px;top:442.50px;" width="19.29" height="18.00" viewBox="0 0 1920 1792"><path fill="#333" transform="translate(0,1536) scale(1,-1)" d="M1920 384q0 -159 -112.5 -271.5t-271.5 -112.5h-1088q-185 0 -316.5 131.5t-131.5 316.5q0 132 71 241.5t187 163.5q-2 28 -2 43q0 212 150 362t362 150q158 0 286.5 -88t187.5 -230q70 62 166 62q106 0 181 -75t75 -181q0 -75 -41 -138q129 -30 213 -134.5t84 -239.5z "/></svg>
<div class="t ls" style="left:44.20px;top:451.00px;font-size:14.4px;color:#333;letter-spacing:0.03px;"><span>CF-JS</span></div>
<svg class="i" style="left:167.00px;top:444.00px;" width="5.18" height="14.50" viewBox="0 0 640 1792"><path fill="#222" transform="translate(0,1536) scale(1,-1)" d="M576 640q0 -26 -19 -45l-448 -448q-19 -19 -45 -19t-45 19t-19 45v896q0 26 19 45t45 19t45 -19l448 -448q19 -19 19 -45z"/></svg>
<svg class="i" style="left:13.00px;top:473.50px;" width="19.29" height="18.00" viewBox="0 0 1920 1792"><path fill="#333" transform="translate(0,1536) scale(1,-1)" d="M1920 384q0 -159 -112.5 -271.5t-271.5 -112.5h-1088q-185 0 -316.5 131.5t-131.5 316.5q0 132 71 241.5t187 163.5q-2 28 -2 43q0 212 150 362t362 150q158 0 286.5 -88t187.5 -230q70 62 166 62q106 0 181 -75t75 -181q0 -75 -41 -138q129 -30 213 -134.5t84 -239.5z "/></svg>
<div class="t ls" style="left:44.20px;top:482.00px;font-size:14.4px;color:#333;letter-spacing:0.03px;"><span>XIDE-JS</span></div>
<svg class="i" style="left:167.00px;top:475.00px;" width="5.18" height="14.50" viewBox="0 0 640 1792"><path fill="#222" transform="translate(0,1536) scale(1,-1)" d="M576 640q0 -26 -19 -45l-448 -448q-19 -19 -45 -19t-45 19t-19 45v896q0 26 19 45t45 19t45 -19l448 -448q19 -19 19 -45z"/></svg>
<svg class="i" style="left:13.00px;top:504.50px;" width="19.29" height="18.00" viewBox="0 0 1920 1792"><path fill="#333" transform="translate(0,1536) scale(1,-1)" d="M1920 384q0 -159 -112.5 -271.5t-271.5 -112.5h-1088q-185 0 -316.5 131.5t-131.5 316.5q0 132 71 241.5t187 163.5q-2 28 -2 43q0 212 150 362t362 150q158 0 286.5 -88t187.5 -230q70 62 166 62q106 0 181 -75t75 -181q0 -75 -41 -138q129 -30 213 -134.5t84 -239.5z "/></svg>
<div class="t ls" style="left:44.20px;top:513.00px;font-size:14.4px;color:#333;letter-spacing:0.03px;"><span>Dropbox</span></div>
<svg class="i" style="left:167.00px;top:506.00px;" width="5.18" height="14.50" viewBox="0 0 640 1792"><path fill="#222" transform="translate(0,1536) scale(1,-1)" d="M576 640q0 -26 -19 -45l-448 -448q-19 -19 -45 -19t-45 19t-19 45v896q0 26 19 45t45 19t45 -19l448 -448q19 -19 19 -45z"/></svg>
<svg class="i" style="left:13.00px;top:535.50px;" width="19.29" height="18.00" viewBox="0 0 1920 1792"><path fill="#333" transform="translate(0,1536) scale(1,-1)" d="M1920 384q0 -159 -112.5 -271.5t-271.5 -112.5h-1088q-185 0 -316.5 131.5t-131.5 316.5q0 132 71 241.5t187 163.5q-2 28 -2 43q0 212 150 362t362 150q158 0 286.5 -88t187.5 -230q70 62 166 62q106 0 181 -75t75 -181q0 -75 -41 -138q129 -30 213 -134.5t84 -239.5z "/></svg>
<div class="t ls" style="left:44.20px;top:544.00px;font-size:14.4px;color:#333;letter-spacing:0.03px;"><span>Google</span></div>
<svg class="i" style="left:167.00px;top:537.00px;" width="5.18" height="14.50" viewBox="0 0 640 1792"><path fill="#222" transform="translate(0,1536) scale(1,-1)" d="M576 640q0 -26 -19 -45l-448 -448q-19 -19 -45 -19t-45 19t-19 45v896q0 26 19 45t45 19t45 -19l448 -448q19 -19 19 -45z"/></svg>
<svg class="i" style="left:13.00px;top:566.50px;" width="19.29" height="18.00" viewBox="0 0 1920 1792"><path fill="#333" transform="translate(0,1536) scale(1,-1)" d="M1920 384q0 -159 -112.5 -271.5t-271.5 -112.5h-1088q-185 0 -316.5 131.5t-131.5 316.5q0 132 71 241.5t187 163.5q-2 28 -2 43q0 212 150 362t362 150q158 0 286.5 -88t187.5 -230q70 62 166 62q106 0 181 -75t75 -181q0 -75 -41 -138q129 -30 213 -134.5t84 -239.5z "/></svg>
<div class="t ls" style="left:44.20px;top:575.00px;font-size:14.4px;color:#333;letter-spacing:0.03px;"><span>home</span></div>
<svg class="i" style="left:167.00px;top:568.00px;" width="5.18" height="14.50" viewBox="0 0 640 1792"><path fill="#222" transform="translate(0,1536) scale(1,-1)" d="M576 640q0 -26 -19 -45l-448 -448q-19 -19 -45 -19t-45 19t-19 45v896q0 26 19 45t45 19t45 -19l448 -448q19 -19 19 -45z"/></svg>
<div class="b" style="left:3px;top:592px;width:175.3px;height:1px;background:#d0d0d0;"></div>
<svg class="i" style="left:13.30px;top:601.60px;" width="14.14" height="18.00" viewBox="0 0 1408 1792"><path fill="#333" transform="translate(0,1536) scale(1,-1)" d="M1408 800v-192q0 -40 -28 -68t-68 -28h-416v-416q0 -40 -28 -68t-68 -28h-192q-40 0 -68 28t-28 68v416h-416q-40 0 -68 28t-28 68v192q0 40 28 68t68 28h416v416q0 40 28 68t68 28h192q40 0 68 -28t28 -68v-416h416q40 0 68 -28t28 -68z"/></svg>
<div class="t ls" style="left:44.20px;top:609.00px;font-size:14.4px;color:#333;letter-spacing:0.03px;"><span>Add</span></div>
<svg class="i" style="left:167.00px;top:602.00px;" width="5.18" height="14.50" viewBox="0 0 640 1792"><path fill="#222" transform="translate(0,1536) scale(1,-1)" d="M576 640q0 -26 -19 -45l-448 -448q-19 -19 -45 -19t-45 19t-19 45v896q0 26 19 45t45 19t45 -19l448 -448q19 -19 19 -45z"/></svg>
<svg class="i" style="left:43px;top:247px" width="18" height="18" viewBox="0 0 18 18"><path d="M4.7 2.2q0 -1.3 1.3 -1.3q1.3 0 1.3 1.3v4.4q0.2 -0.8 1.4 -0.8q1.4 0 1.5 1.2q0.2 -0.7 1.4 -0.7q1.4 0 1.5 1.3q0.2 -0.6 1.4 -0.5q1.5 0.1 1.7 1.4v3.9q0 1.2 -0.9 1.9v1.4h-11v-1.4q-2.6 -2.4 -2.9 -3.6q-0.2 -1 0.7 -1.2q1 -0.3 2.6 1.2z" fill="#fff" stroke="#111" stroke-width="1.1" stroke-linejoin="round"/><path d="M6 12.4h1.5M9 12.4h1.5M12 12.4h1.5" stroke="#777" stroke-width="0.9"/></svg>
</body></html>
